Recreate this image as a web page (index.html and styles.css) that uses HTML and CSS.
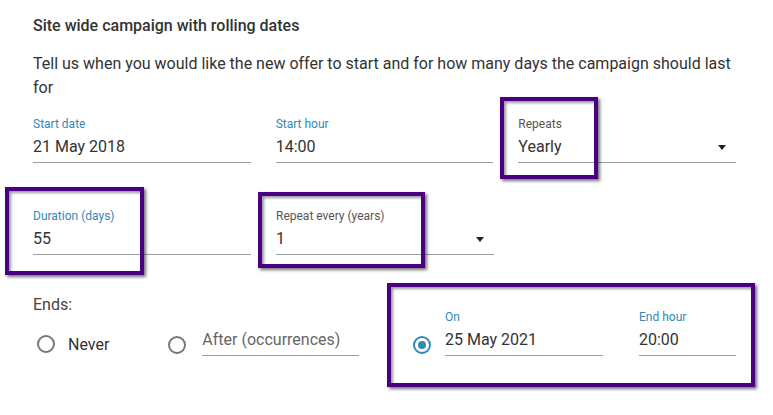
FILE: index.html
```html
<!DOCTYPE html>
<html lang="en">
<head>
    <meta charset="UTF-8">
    <title>Campaign dates</title>
    <link rel="stylesheet" href="styles.css">
</head>
<body>
    <div class="page">
        <div class="campaign">
            <h3>Site wide campaign with rolling dates</h3>
            <p class="intro">Tell us when you would like the new offer to start and for how many days the campaign should last for</p>

            <div class="form-row first">
                <div class="field">
                    <label class="focus">Start date</label>
                    <div class="value">21 May 2018</div>
                </div>
                <div class="field">
                    <label class="focus">Start hour</label>
                    <div class="value">14:00</div>
                </div>
                <div class="field">
                    <label>Repeats</label>
                    <div class="value select">Yearly <span class="caret"></span></div>
                </div>
            </div>

            <div class="form-row second">
                <div class="field">
                    <label class="focus">Duration (days)</label>
                    <div class="value">55</div>
                </div>
                <div class="field">
                    <label>Repeat every (years)</label>
                    <div class="value select">1 <span class="caret"></span></div>
                </div>
            </div>

            <div class="ends-row">
                <div class="ends">
                    <div class="ends-title">Ends:</div>
                    <div class="options">
                        <div class="option never">
                            <span class="radio"></span>
                            <span>Never</span>
                        </div>
                        <div class="option after">
                            <span class="radio"></span>
                            <div class="field after-field">
                                <div class="value placeholder">After (occurrences)</div>
                            </div>
                        </div>
                    </div>
                </div>
                <div class="option on">
                    <span class="radio checked"></span>
                    <div class="field on-field">
                        <label class="focus">On</label>
                        <div class="value">25 May 2021</div>
                    </div>
                    <div class="field hour-field">
                        <label class="focus">End hour</label>
                        <div class="value">20:00</div>
                    </div>
                </div>
            </div>
        </div>

        <!-- annotation boxes drawn over the form -->
        <div class="mark mark-repeats"></div>
        <div class="mark mark-duration"></div>
        <div class="mark mark-every"></div>
        <div class="mark mark-ends"></div>
    </div>
</body>
</html>
```

FILE: styles.css
```css
body {
    margin: 0;
    background: #fff;
    font-family: Roboto, "Liberation Sans", Arial, sans-serif;
    color: #333;
}

.page {
    position: relative;
    width: 773px;
    height: 415px;
    overflow: hidden;
}

.campaign {
    width: 703px;
    padding: 16px 0 0 33px;
}

h3 {
    margin: 0;
    font-size: 16px;
    font-weight: 500;
    line-height: 20px;
    color: #333;
}

.intro {
    margin: 16px 0 0;
    font-size: 16px;
    line-height: 24px;
    color: #333;
}

.form-row {
    display: flex;
    gap: 25px;
}

.form-row.first {
    margin-top: 16px;
}

.form-row.second {
    margin-top: 45px;
}

.form-row .field {
    width: 218px;
}

.field label {
    display: block;
    font-size: 12px;
    line-height: 16px;
    margin-bottom: 3px;
    color: #555;
}

.field label.focus {
    color: #3288b6;
}

.value {
    font-size: 16px;
    line-height: 24px;
    padding-bottom: 3px;
    border-bottom: 1px solid #9e9e9e;
    color: #333;
}

.value.select {
    display: flex;
    justify-content: space-between;
    align-items: center;
}

.caret {
    width: 0;
    height: 0;
    margin-right: 10px;
    border-left: 4px solid transparent;
    border-right: 4px solid transparent;
    border-top: 5px solid #222;
}

.value.placeholder {
    color: #666;
}

.ends-row {
    display: flex;
    align-items: flex-end;
}

.ends {
    width: 327px;
}

.ends-title {
    margin-top: 40px;
    font-size: 16px;
    line-height: 20px;
    color: #444;
}

.options {
    display: flex;
    align-items: flex-end;
    margin-top: 13px;
    padding-left: 4px;
}

.option {
    display: flex;
    align-items: flex-end;
}

.option.never {
    align-items: center;
    height: 20px;
    margin-bottom: 2px;
    font-size: 16px;
    color: #333;
}

.radio {
    box-sizing: border-box;
    width: 18px;
    height: 18px;
    border: 2px solid #777;
    border-radius: 50%;
    flex-shrink: 0;
}

.never .radio {
    margin-right: 13px;
}

.after {
    margin-left: 59px;
}

.after .radio,
.on .radio {
    margin-bottom: 2px;
}

.after-field {
    width: 157px;
    margin-left: 16px;
}

.radio.checked {
    border-color: #3288b6;
    display: flex;
    align-items: center;
    justify-content: center;
}

.radio.checked::after {
    content: "";
    width: 8px;
    height: 8px;
    border-radius: 50%;
    background: #3288b6;
}

.on {
    margin-left: 53px;
}

.on-field {
    width: 158px;
    margin-left: 14px;
}

.hour-field {
    width: 97px;
    margin-left: 36px;
}

.mark {
    position: absolute;
    box-sizing: border-box;
    border: 4px solid #4b0082;
    box-shadow: 2px 2px 3px rgba(0, 0, 0, 0.55), inset 2px 2px 3px rgba(0, 0, 0, 0.4);
}

.mark-repeats {
    left: 500px;
    top: 97px;
    width: 98px;
    height: 82px;
}

.mark-duration {
    left: 5px;
    top: 187px;
    width: 139px;
    height: 88px;
}

.mark-every {
    left: 258px;
    top: 192px;
    width: 167px;
    height: 76px;
}

.mark-ends {
    left: 387px;
    top: 283px;
    width: 368px;
    height: 104px;
}
```
